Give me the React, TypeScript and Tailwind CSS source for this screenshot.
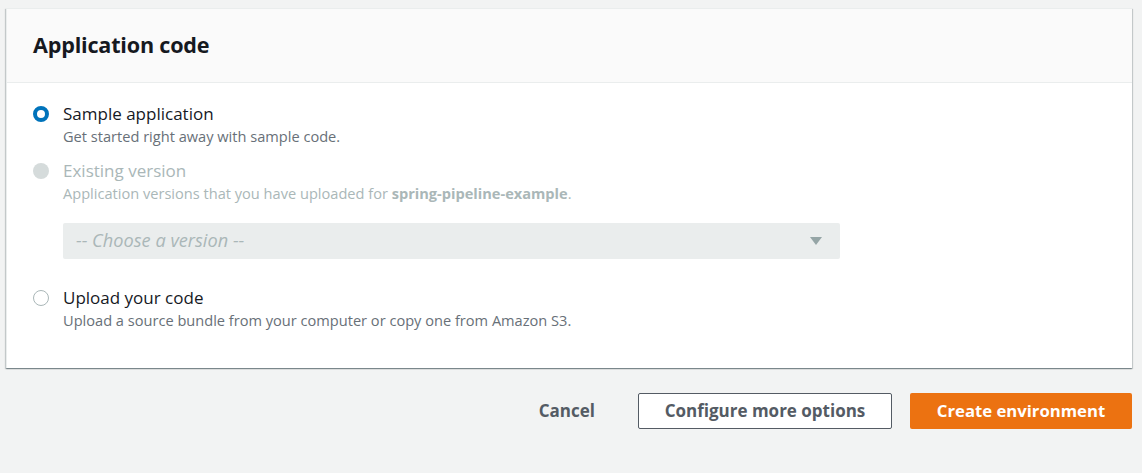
import React from 'react'

const FONT = { fontFamily: '"Open Sans", "Noto Sans", Arial, sans-serif' }

type RadioState = 'checked' | 'disabled' | 'empty'

function Radio({ state }: { state: RadioState }) {
  if (state === 'checked') {
    return <span className="block w-4 h-4 rounded-full border-[4px] border-[#0073bb] bg-white box-border" />
  }
  if (state === 'disabled') {
    return <span className="block w-4 h-4 rounded-full bg-[#d5dbdb]" />
  }
  return <span className="block w-4 h-4 rounded-full border border-[#aab7b8] bg-white box-border" />
}

interface OptionProps {
  state: RadioState
  label: string
  children: React.ReactNode
}

function Option({ state, label, children }: OptionProps) {
  const disabled = state === 'disabled'
  return (
    <div className="flex">
      <div className="w-[30px] h-[22px] flex items-center">
        <Radio state={state} />
      </div>
      <div>
        <div className={`text-[17px] leading-[22px] ${disabled ? 'text-[#aab7b8]' : 'text-[#16191f]'}`}>{label}</div>
        <div className={`text-[14.6px] leading-[20px] mt-[1px] ${disabled ? 'text-[#aab7b8]' : 'text-[#687078]'}`}>{children}</div>
      </div>
    </div>
  )
}

export default function App() {
  return (
    <div className="w-[1142px] h-[473px] bg-[#f2f3f3] pl-[6px] pr-[10px] pt-[8px]" style={FONT}>
      <div className="bg-white border-l border-t border-[#eaeded] shadow-[0_1px_1px_0_rgba(0,28,36,0.3),1px_1px_1px_0_rgba(0,28,36,0.15),-1px_1px_1px_0_rgba(0,28,36,0.15)]">
        <div className="h-[74px] bg-[#fafafa] border-b border-[#eaeded] flex items-center pl-[26px]">
          <h2 className="text-[21.6px] font-bold text-[#16191f] tracking-[-0.2px]">Application code</h2>
        </div>
        <div className="pl-[26px] pt-[20px] pb-[38px]">
          <Option state="checked" label="Sample application">
            Get started right away with sample code.
          </Option>
          <div className="mt-[14px]">
            <Option state="disabled" label="Existing version">
              Application versions that you have uploaded for <span className="font-bold">spring-pipeline-example</span>.
            </Option>
          </div>
          <div className="ml-[30px] mt-[20px] w-[777px] h-[36px] rounded-[2px] bg-[#eaeded] flex items-center justify-between pl-[13px] pr-[17px]">
            <span className="text-[18.2px] italic text-[#aab7b8]">-- Choose a version --</span>
            <svg width="14" height="10" viewBox="0 0 14 10">
              <path d="M1 1 L13 1 L7 9 Z" fill="#95a5a6" />
            </svg>
          </div>
          <div className="mt-[28px]">
            <Option state="empty" label="Upload your code">
              Upload a source bundle from your computer or copy one from Amazon S3.
            </Option>
          </div>
        </div>
      </div>
      <div className="flex justify-end items-center mt-[25px]">
        <button className="h-[36px] px-[20px] text-[17px] font-bold text-[#545b64]">Cancel</button>
        <button className="ml-[23px] h-[36px] w-[254px] border border-[#545b64] rounded-[2px] bg-white text-[17px] font-bold text-[#545b64]">
          Configure more options
        </button>
        <button className="ml-[18px] h-[36px] w-[222px] rounded-[2px] bg-[#ec7211] text-[16.7px] font-bold text-white">
          Create environment
        </button>
      </div>
    </div>
  )
}
